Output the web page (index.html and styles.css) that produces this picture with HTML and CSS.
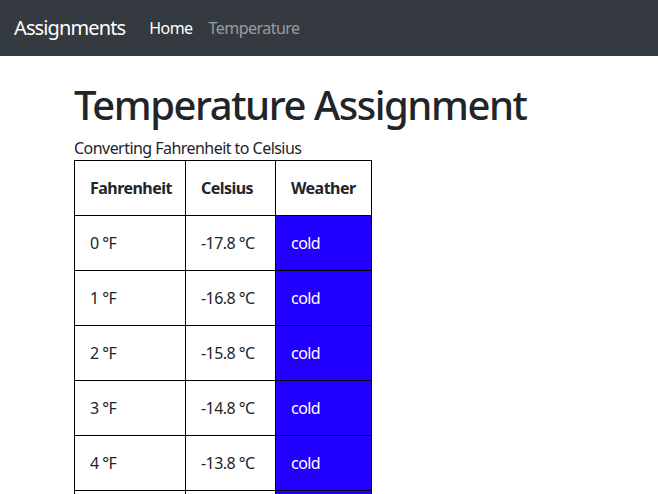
FILE: index.html
```html
<!DOCTYPE html>
<html lang="en">
<head>
<meta charset="utf-8">
<title>Temperature</title>
<link rel="stylesheet" href="styles.css">
</head>
<body>
<nav class="navbar">
  <a class="brand" href="#">Assignments</a>
  <a class="nav-link active" href="#">Home</a>
  <a class="nav-link" href="#">Temperature</a>
</nav>
<main class="container">
  <h1 class="title">Temperature Assignment</h1>
  <div class="subtitle">Converting Fahrenheit to Celsius</div>
  <table class="temps">
    <thead>
      <tr><th class="c1">Fahrenheit</th><th class="c2">Celsius</th><th class="c3">Weather</th></tr>
    </thead>
    <tbody>
      <tr><td>0 °F</td><td>-17.8 °C</td><td class="cold">cold</td></tr>
      <tr><td>1 °F</td><td>-16.8 °C</td><td class="cold">cold</td></tr>
      <tr><td>2 °F</td><td>-15.8 °C</td><td class="cold">cold</td></tr>
      <tr><td>3 °F</td><td>-14.8 °C</td><td class="cold">cold</td></tr>
      <tr><td>4 °F</td><td>-13.8 °C</td><td class="cold">cold</td></tr>
      <tr><td>5 °F</td><td>-12.8 °C</td><td class="cold">cold</td></tr>
      <tr><td>6 °F</td><td>-11.8 °C</td><td class="cold">cold</td></tr>
    </tbody>
  </table>
</main>
</body>
</html>
```
FILE: styles.css
```css
* { box-sizing: border-box; }
html, body { margin: 0; }
body {
  font-family: "Noto Sans", "Open Sans", sans-serif;
  font-size: 16px;
  line-height: 1.5;
  letter-spacing: -0.034em;
  color: #212529;
  background: #fff;
}
a { text-decoration: none; }
.navbar {
  height: 56px;
  background: #343a40;
  display: flex;
  align-items: center;
  padding: 0 16px 0 14px;
}
.brand {
  font-size: 20px;
  letter-spacing: -0.044em;
  color: #fff;
  margin-right: 16px;
  line-height: 30px;
}
.nav-link {
  color: rgba(255,255,255,0.5);
  padding: 0 8px;
}
.nav-link.active { color: #fff; }
.container {
  width: 540px;
  margin: 0 auto;
  padding: 25px 15px 0;
}
.title {
  font-size: 40px;
  font-weight: 500;
  letter-spacing: -0.036em;
  line-height: 1.2;
  margin: 0 0 8px;
}
.subtitle { line-height: 23px; }
.temps {
  border-collapse: collapse;
  border: 1px solid #000;
  table-layout: fixed;
  width: 297px;
}
.temps th, .temps td {
  border: 1px solid #000;
  padding: 15px;
  height: 55px;
  text-align: left;
  vertical-align: middle;
  white-space: nowrap;
}
.temps th { font-weight: 700; }
.c1 { width: 111px; }
.c2 { width: 90px; }
.c3 { width: 96px; }
.temps td.cold {
  background: #2200ff;
  color: #fff;
}
```
